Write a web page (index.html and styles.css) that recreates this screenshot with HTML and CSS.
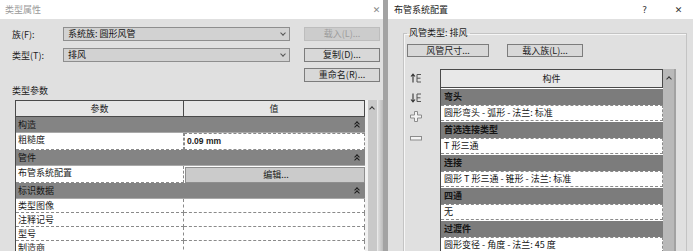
FILE: index.html
```html
<!DOCTYPE html>
<html lang="zh-CN">
<head>
  <meta charset="UTF-8" />
  <title>类型属性 / 布管系统配置</title>
  <link rel="stylesheet" href="styles.css">
</head>
<body>

  <div class="screen">

    <!-- 类型属性 -->
    <div class="dialog dlg-type">
      <div class="titlebar">
        <span class="title">类型属性</span>
        <span class="tb-close">✕</span>
      </div>

      <div class="dlg-body">
        <div class="form-row">
          <label class="form-label">族(F):</label>
          <div class="combo">系统族: 圆形风管<span class="combo-chev"></span></div>
          <button class="btn btn-side" disabled>载入(L)...</button>
        </div>
        <div class="form-row">
          <label class="form-label">类型(T):</label>
          <div class="combo">排风<span class="combo-chev"></span></div>
          <button class="btn btn-side">复制(D)...</button>
        </div>
        <div class="form-row form-row-right">
          <button class="btn btn-side">重命名(R)...</button>
        </div>

        <div class="section-label">类型参数</div>

        <div class="grid-wrap">
          <div class="ptable">
            <div class="thead">
              <div class="th th-param">参数</div>
              <div class="th th-value">值</div>
            </div>

            <div class="group">构造<span class="fold"></span></div>
            <div class="prow">
              <div class="cell cell-param">粗糙度</div>
              <div class="cell cell-value num">0.09 mm</div>
            </div>

            <div class="group">管件<span class="fold"></span></div>
            <div class="prow">
              <div class="cell cell-param">布管系统配置</div>
              <div class="cell cell-value cell-btn">编辑...</div>
            </div>

            <div class="group">标识数据<span class="fold"></span></div>
            <div class="prow prow-sm">
              <div class="cell cell-param">类型图像</div>
              <div class="cell cell-value"></div>
            </div>
            <div class="prow prow-sm">
              <div class="cell cell-param">注释记号</div>
              <div class="cell cell-value"></div>
            </div>
            <div class="prow prow-sm">
              <div class="cell cell-param">型号</div>
              <div class="cell cell-value"></div>
            </div>
            <div class="prow prow-sm">
              <div class="cell cell-param">制造商</div>
              <div class="cell cell-value"></div>
            </div>
          </div>
          <div class="vscroll vscroll-light"><span class="scroll-up"></span></div>
          <div class="dlg-edge"></div>
        </div>
      </div>
    </div>

    <div class="splitter"></div>

    <!-- 布管系统配置 -->
    <div class="dialog dlg-routing">
      <div class="titlebar titlebar-active">
        <span class="title">布管系统配置</span>
        <span class="tb-help">?</span>
        <span class="tb-close">✕</span>
      </div>

      <div class="dlg-body">
        <fieldset class="groupbox">
          <legend>风管类型: 排风</legend>

          <div class="btn-row">
            <button class="btn btn-size">风管尺寸...</button>
            <button class="btn btn-load">载入族(L)...</button>
          </div>

          <div class="routing">
            <div class="tools">
              <svg class="tool tool-up" width="12" height="10" viewBox="0 0 12 10">
                <path d="M3 9.5V1.5M1 3.5L3 1.2L5 3.5" fill="none" stroke="#333" stroke-width="1.1"/>
                <path d="M7 1.5V9M7 1.5h4M7 5.2h3.5M7 9h4" fill="none" stroke="#555" stroke-width="1"/>
              </svg>
              <svg class="tool tool-down" width="12" height="10" viewBox="0 0 12 10">
                <path d="M3 0.5V8.5M1 6.5L3 8.8L5 6.5" fill="none" stroke="#333" stroke-width="1.1"/>
                <path d="M7 1V8.5M7 1h4M7 4.8h3.5M7 8.5h4" fill="none" stroke="#555" stroke-width="1"/>
              </svg>
              <svg class="tool tool-add" width="12" height="11" viewBox="0 0 12 11">
                <path d="M4.5 0.5h3v3.5h4v3h-4v3.5h-3V7h-4V4h4z" fill="#f4f4f4" stroke="#8c8c8c" stroke-width="1"/>
              </svg>
              <svg class="tool tool-remove" width="12" height="5" viewBox="0 0 12 5">
                <rect x="0.5" y="0.5" width="11" height="3.5" fill="#f4f4f4" stroke="#8c8c8c" stroke-width="1"/>
              </svg>
            </div>

            <div class="rtable">
              <div class="rhead">构件</div>

              <div class="rgroup">弯头</div>
              <div class="rrow">圆形弯头 - 弧形 - 法兰: 标准</div>

              <div class="rgroup">首选连接类型</div>
              <div class="rrow">T 形三通</div>

              <div class="rgroup">连接</div>
              <div class="rrow">圆形 T 形三通 - 锥形 - 法兰: 标准</div>

              <div class="rgroup">四通</div>
              <div class="rrow">无</div>

              <div class="rgroup">过渡件</div>
              <div class="rrow">圆形变径 - 角度 - 法兰: 45 度</div>
            </div>

            <div class="vscroll vscroll-dark"><span class="scroll-up scroll-up-head"></span></div>
          </div>
        </fieldset>
      </div>
    </div>

  </div>

</body>
</html>
```

FILE: styles.css
```css
* {
  box-sizing: border-box;
}

body {
  margin: 0;
  font-family: "Noto Sans CJK SC", "Liberation Sans", sans-serif;
  font-size: 9px;
  color: #1c1c1c;
}

.screen {
  display: flex;
  width: 693px;
  height: 251px;
  overflow: hidden;
  background: #a8a8a8;
}

.dialog {
  display: flex;
  flex-direction: column;
  height: 251px;
  background: #e0e0e0;
}

.dlg-type {
  width: 383px;
}

.splitter {
  width: 5px;
  background: #a3a3a3;
}

.dlg-routing {
  width: 305px;
}

/* title bars */
.titlebar {
  height: 19px;
  flex-shrink: 0;
  background: #ffffff;
  display: flex;
  align-items: center;
  padding: 0 2px 0 5px;
}

.titlebar .title {
  flex: 1;
  color: #9a9a9a;
  line-height: 12px;
}

.titlebar-active {
  padding: 0 10px 0 6px;
}

.titlebar-active .title {
  color: #222;
}

.tb-close {
  font-family: "DejaVu Sans", sans-serif;
  font-size: 9px;
  color: #888;
  width: 9px;
  text-align: center;
}

.titlebar-active .tb-close {
  color: #333;
}

.tb-help {
  font-family: "DejaVu Sans", sans-serif;
  font-size: 9px;
  color: #333;
  margin-right: 27px;
}

.dlg-body {
  flex: 1;
  min-height: 0;
}

/* left form */
.dlg-type .dlg-body {
  padding: 8px 0 0 12px;
}

.form-row {
  display: flex;
  align-items: center;
  height: 14px;
  margin-bottom: 7px;
}

.form-row:nth-child(2) {
  margin-bottom: 6px;
}

.form-row-right {
  justify-content: flex-end;
  padding-right: 3px;
  margin-bottom: 0;
}

.form-label {
  width: 51px;
  color: #222;
}

.combo {
  position: relative;
  width: 227px;
  height: 14px;
  line-height: 12px;
  padding-left: 4px;
  background: #d2d2d2;
  border: 1px solid #8e8e8e;
  color: #151515;
}

.combo-chev {
  position: absolute;
  right: 4px;
  top: 3px;
  width: 4px;
  height: 4px;
  border-right: 1px solid #555;
  border-bottom: 1px solid #555;
  transform: rotate(45deg);
}

.btn {
  height: 14px;
  padding: 0;
  font-family: "Noto Sans CJK SC", "Liberation Sans", sans-serif;
  font-size: 9px;
  line-height: 12px;
  color: #1c1c1c;
  background: #d8d8d8;
  border: 1px solid #7c7c7c;
}

.btn:disabled {
  color: #9c9c9c;
  background: #cccccc;
  border-color: #bdbdbd;
}

.btn-side {
  width: 76px;
  margin-left: 14px;
}

.section-label {
  margin-top: 3px;
  height: 15px;
  line-height: 12px;
  color: #1c1c1c;
}

/* parameter table */
.grid-wrap {
  display: flex;
  margin-left: 3px;
  height: 160px;
}

.ptable {
  width: 350px;
  background: #ffffff;
  border-left: 1px solid #4a4a4a;
}

.thead {
  display: flex;
  height: 17px;
  background: #e6e6e6;
  border: 1px solid #4a4a4a;
  border-left: none;
}

.th {
  text-align: center;
  line-height: 15px;
  color: #222;
}

.th-param {
  width: 168px;
  border-right: 1px solid #4a4a4a;
}

.th-value {
  flex: 1;
}

.group {
  display: flex;
  justify-content: space-between;
  align-items: center;
  height: 16px;
  padding: 0 6px 0 2px;
  background: #848484;
  border-bottom: 1px solid #a9a9a9;
  color: #161616;
}

/* double "fold up" chevron */
.fold {
  position: relative;
  width: 5px;
  height: 7px;
}

.fold::before,
.fold::after {
  content: "";
  position: absolute;
  left: 1px;
  width: 3px;
  height: 3px;
  border-left: 1px solid #1a1a1a;
  border-top: 1px solid #1a1a1a;
  transform: rotate(45deg);
}

.fold::before {
  top: 1px;
}

.fold::after {
  top: 4px;
}

.prow {
  display: flex;
  height: 17px;
  background: #ffffff;
}

.prow-sm {
  height: 14px;
}

.cell {
  line-height: 13px;
  border-bottom: 1px dashed #8a8a8a;
}

.cell-param {
  width: 168px;
  padding-left: 2px;
  border-right: 1px dashed #8a8a8a;
}

.cell-value {
  flex: 1;
  padding-left: 2px;
  border-right: 1px dashed #8a8a8a;
}

.num {
  font-family: "Liberation Sans", sans-serif;
  font-weight: bold;
  font-size: 8.5px;
  line-height: 15px;
  border-top: 1px dashed #8a8a8a;
  border-left: 1px dashed #8a8a8a;
}

.cell-btn {
  margin: 1px 0 0 1px;
  background: #cbcbcb;
  border: 1px solid #8e8e8e;
  text-align: center;
  line-height: 13px;
}

.vscroll {
  position: relative;
  width: 13px;
  flex-shrink: 0;
}

.vscroll-light {
  background: #c9c9c9;
  border-left: 3px solid #f2f2f2;
  border-right: 1px solid #e9e9e9;
}

.dlg-edge {
  width: 5px;
  background: linear-gradient(to right, #dcdcdc, #bcbcbc);
}

.scroll-up {
  position: absolute;
  left: 2px;
  top: 7px;
  width: 4px;
  height: 4px;
  border-left: 1px solid #333;
  border-top: 1px solid #333;
  transform: rotate(45deg);
}

/* routing dialog */
.dlg-routing .dlg-body {
  padding: 8px 6px 0 15px;
}

.groupbox {
  margin: 0;
  padding: 5px 0 0 3px;
  height: 240px;
  border: 1px solid #c4c4c4;
  box-shadow: inset 1px 1px 0 #f6f6f6;
}

.groupbox legend {
  padding: 0 2px;
  line-height: 12px;
  color: #1c1c1c;
}

.btn-row {
  display: flex;
  gap: 18px;
}

.btn-size {
  width: 82px;
  height: 13px;
  line-height: 11px;
}

.btn-load {
  width: 76px;
  height: 13px;
  line-height: 11px;
}

.routing {
  display: flex;
  margin-top: 12px;
}

.tools {
  width: 33px;
  display: flex;
  flex-direction: column;
  padding: 4px 0 0 3px;
}

.tool {
  display: block;
}

.tool-down {
  margin-top: 10px;
}

.tool-add {
  margin-top: 8px;
}

.tool-remove {
  margin-top: 14px;
}

.rtable {
  width: 223px;
  background: #ffffff;
  border-left: 1px solid #4a4a4a;
}

.rhead {
  height: 19px;
  line-height: 17px;
  text-align: center;
  background: #e8e8e8;
  border: 1px solid #4a4a4a;
  border-left: none;
  color: #222;
}

.rgroup {
  height: 16px;
  line-height: 15px;
  margin-top: 1px;
  padding-left: 3px;
  background: #7c7c7c;
  color: #141414;
  font-weight: bold;
}

.rrow {
  height: 16px;
  line-height: 14px;
  padding-left: 3px;
  background: #ffffff;
  border: 1px dashed #8a8a8a;
  border-left: none;
  color: #141414;
}

.vscroll-dark {
  background: #b9b9b9;
  border-right: 2px solid #a2a2a2;
}

.scroll-up-head {
  left: 4px;
  top: 8px;
}
```
